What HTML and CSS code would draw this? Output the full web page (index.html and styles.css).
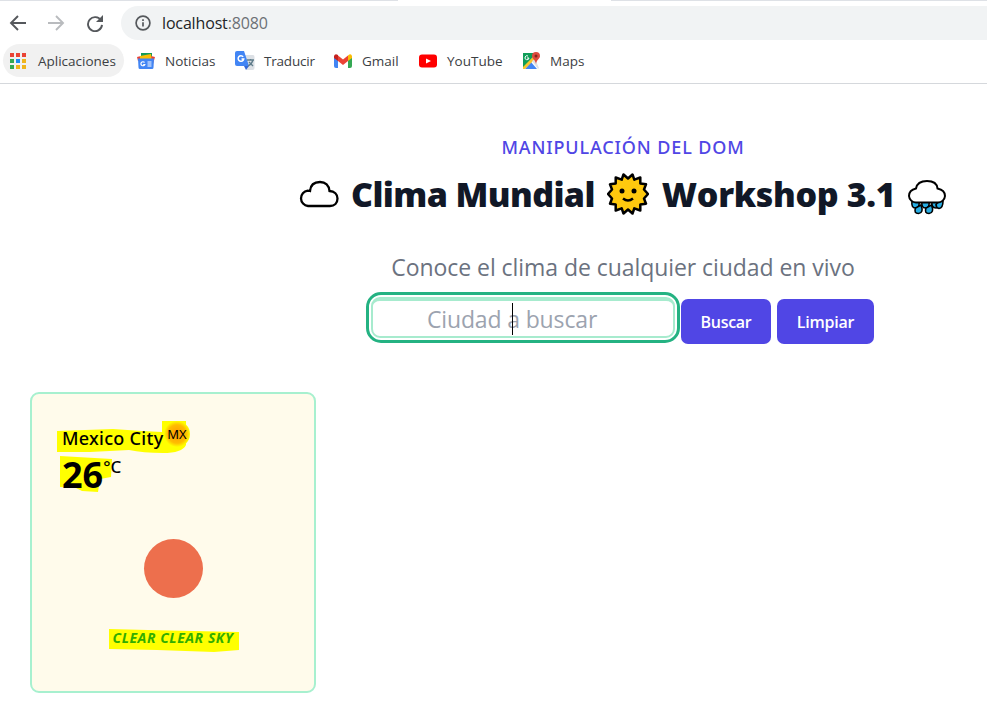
FILE: index.html
```html
<!DOCTYPE html>
<html lang="es">
<head>
<meta charset="utf-8">
<title>Clima Mundial</title>
<link rel="stylesheet" href="styles.css">
</head>
<body>
<header class="browser">
  <div class="tab-edge"><span class="active-tab"></span></div>
  <nav class="toolbar">
    <svg class="nav-icon" viewBox="0 0 18 18"><path d="M17 9H2.500M9 2 2 9l7 7"/></svg>
    <svg class="nav-icon muted" viewBox="0 0 18 18"><path d="M1 9h14.500M9 2l7 7-7 7"/></svg>
    <svg class="nav-icon reload" viewBox="0 0 18 18"><path d="M15 6.500A7 7 0 1 0 16 10.800"/><path class="solid" d="M17 1v7h-7z"/></svg>
    <div class="address">
      <svg class="info" viewBox="0 0 16 16"><circle cx="8" cy="8" r="6.900"/><path d="M8 7.200v4.300M8 4.300v1.700"/></svg>
      <span class="url">localhost<span class="port">:8080</span></span>
    </div>
  </nav>
  <nav class="bookmarks">
    <a class="bookmark apps">
      <svg viewBox="0 0 18 18"><path fill="#e94335" d="M1 1h4v4H1zM7 1h4v4H7zM13 1h4v4h-4z"/><path fill="#34a853" d="M1 7h4v4H1zM1 13h4v4H1z"/><path fill="#1a8cf0" d="M7 7h4v4H7z"/><path fill="#efb51d" d="M13 7h4v4h-4zM7 13h4v4H7zM13 13h4v4h-4z"/></svg>
      <span>Aplicaciones</span>
    </a>
    <a class="bookmark news">
      <svg viewBox="0 0 18 18"><path fill="#169b57" d="M4 1h11v9H4z"/><path fill="#ea4335" d="m14 4 4 1-2 7-6-2z"/><path fill="#ea4335" d="m0 5 4-1v5H1z"/><path fill="#fbbc04" d="m3 4 11-2 1 9H3z"/><path fill="#4285f4" d="M1 6.500h16l-.5 9q0 1.500-1.500 1.500H3q-1.500 0-1.500-1.500z"/><path d="M7.500 10.500a2 2 0 1 0 .3 2H6.200M10.500 10h4M10.500 12h4M10.500 14h4" fill="none" stroke="#fff" stroke-width="1.200"/></svg>
      <span>Noticias</span>
    </a>
    <a class="bookmark translate">
      <svg viewBox="0 0 20 20"><path fill="#dce0e5" d="M8 4h10q1.500 0 1.500 2v11q0 2-2 2h-6z"/><path fill="#4285f4" d="M2 0h7l5 15H2q-2 0-2-2V2q0-2 2-2z"/><path fill="#3367d6" d="M9 15h5l-3 4z"/><path d="M8.200 5.800a2.800 2.800 0 1 0 .5 2.200H6.500" stroke="#fff" stroke-width="1.500" fill="none"/><path d="M12 9h7M15.500 8v1M18 9q-1 4-5 6M14 11l4 4" stroke="#607d8b" stroke-width="1.300" fill="none"/></svg>
      <span>Traducir</span>
    </a>
    <a class="bookmark gmail">
      <svg viewBox="0 0 18 18"><path fill="#4285f4" d="M0 4h4v12H2q-2 0-2-2z"/><path fill="#34a853" d="M14 4h4v10q0 2-2 2h-2z"/><path fill="#ea4335" d="M4 3.500 9 7.500l5-4V9l-5 4-5-4z"/><path fill="#c5221f" d="M0 5V4q1-3 4-1v6L0 6z"/><path fill="#fbbc04" d="M14 3.500Q17 1 18 4v2l-4 3z"/></svg>
      <span>Gmail</span>
    </a>
    <a class="bookmark youtube">
      <svg viewBox="0 0 18 18"><rect y="2.500" width="18" height="13" rx="3" fill="red"/><path fill="#fff" d="M7 6.500v5l5-2.500z"/></svg>
      <span>YouTube</span>
    </a>
    <a class="bookmark maps">
      <svg viewBox="0 0 18 18"><path fill="#0f9d58" d="M1 1h14L1 16z"/><path fill="#4285f4" d="m9 10 6 7H3z"/><path fill="#f8c62c" d="M1 15 12 4l1 3L3 17H1z"/><path fill="#dfe2e5" d="m10 9 3-2 4 9-1 1z"/><path d="M6 4a2 2 0 1 0 1 2H5" stroke="#fff" fill="none"/><path fill="#dd4b3e" d="M14 0q4 0 4 4c0 3-3 3-4 8-1-5-4-5-4-8q0-4 4-4z"/><circle cx="14" cy="4" r="1.500" fill="#842718"/></svg>
      <span>Maps</span>
    </a>
  </nav>
</header>
<main>
  <section class="hero">
    <p class="eyebrow">MANIPULACIÓN DEL DOM</p>
    <h1>
      <svg class="cloud" viewBox="0 0 40 28"><path d="M9 26a7.700 7.700 0 0 1-.3-15.300q1 0 2.300.3C11.500 5 15.500 2 21 2c5.500 0 9 3.500 9.500 9 5 .2 8 3.500 8 7.500 0 4.500-3 7.500-7.500 7.500z"/></svg>
      <span class="title-left">Clima Mundial</span>
      <svg class="sun" viewBox="0 0 42 42"><path d="m21 5.500 4.500-4 1.800 5.200 6-2.200v6l5.700.8-2 5.200 4 4.500-4 4.500 2 5.200-5.700.8v6l-6-2.200-1.800 5.200-4.500-4-4.500 4-1.800-5.200-6 2.200v-6L3 30.700l2-5.200L1 21l4-4.500-2-5.200 5.700-.8v-6l6 2.200 1.800-5.200z"/><g class="face"><circle cx="15" cy="18" r="2.500"/><circle cx="27" cy="18" r="2.500"/></g><path class="smile" d="M16 25.500q5 4 10 0"/></svg>
      <span class="title-right">Workshop 3.1</span>
      <svg class="rain" viewBox="0 0 40 36"><g class="drops"><path d="M5 22h7q1 7-3.500 7Q4 29 5 22zM15 22h7q1 7-3.500 7Q14 29 15 22zM25 22h8q1 7-4 7t-4-7z"/><path d="M14 26q3 8-2.500 8.500-5 0-3-5.500zM24.500 26q3 8-2.500 8.500-5 0-3-5.500zM32 22h4q0 7-4 7.500-3-1-3-4z"/></g><path class="outline" d="M9 23.500A7 7 0 0 1 2 17q0-6 7-7.500C10 4 15 2 20 2s10 2 10.500 7.500Q38 11 38 17a7 7 0 0 1-7 6.500z"/></svg>
    </h1>
    <p class="subtitle">Conoce el clima de cualquier ciudad en vivo</p>
    <form class="search">
      <div class="field"><span class="placeholder">Ciudad a buscar</span><i class="caret"></i></div>
      <button class="btn search-btn" type="button"><span>Buscar</span></button>
      <button class="btn clear-btn" type="button"><span>Limpiar</span></button>
    </form>
  </section>
  <article class="card">
    <svg class="marks" viewBox="0 0 282 298"><path d="M26 37 82 35 111 37 131 38V27h24v24q-4 8-23 8-20 0-34-3l-39 2H26z"/><path d="m29 62 52 3-1 18-11 2-2 13-16-1-6-3-16-1z"/><path d="m78 235 39 1 91 2v18l-25 2-57-2-48-1z"/></svg>
    <h2 class="city"><span class="name">Mexico City</span><sup>MX</sup></h2>
    <div class="temp"><b>26</b><sup>°C</sup></div>
    <div class="weather-icon"></div>
    <p class="condition">CLEAR CLEAR SKY</p>
  </article>
</main>
</body>
</html>
```
FILE: styles.css
```css
*, *::before { box-sizing: border-box; }
body { margin: 0; background: #fff; font-family: "Open Sans", "Noto Sans", sans-serif; color: #000; height: 710px; overflow: hidden; }
p, h1, h2 { margin: 0; }
svg { flex: none; display: block; }
span { white-space: nowrap; }
.browser { height: 84px; border-bottom: 1px solid #d5d8dc; }
.tab-edge { height: 1px; background: #dee1e6; display: flex; padding-left: 398px; }
.active-tab { width: 213px; background: #fff; }
.toolbar { display: flex; height: 39px; padding: 5px 0 0 9px; align-items: center; }
.nav-icon { width: 18px; height: 18px; margin-right: 20px; fill: none; stroke: #55585c; stroke-width: 1.9; }
.muted { stroke: #b9bbbe; }
.reload { margin: 0 17px 0 1px; }
.solid { fill: #55585c; stroke: none; }
.address { flex: 1; height: 34px; border-radius: 17px 0 0 17px; background: #f1f3f4; display: flex; align-items: center; padding-left: 14px; }
.info { width: 16px; height: 16px; fill: none; stroke: #55585c; stroke-width: 1.7; margin-right: 11px; }
.url { font-size: 16px; letter-spacing: -.15px; color: #222427; }
.port { color: #6c7075; }
.bookmarks { display: flex; height: 39px; align-items: center; padding: 2px 0 0 3px; font-size: 13.500px; color: #3c4043; }
.bookmark { display: flex; align-items: center; height: 33px; }
.bookmark svg { width: 18px; height: 18px; }
.bookmark span { margin-left: 10px; }
.apps { width: 121px; padding-left: 6px; border-radius: 17px; background: #f1f1f1; }
.bookmark.apps span { margin-left: 11px; }
.news { width: 98px; margin-left: 13px; }
.translate { width: 99px; }
.translate svg { width: 20px; height: 20px; }
.bookmark.translate span { margin-left: 9px; letter-spacing: -.2px; }
.gmail { width: 85px; }
.youtube { width: 103px; }
.hero { display: flex; flex-direction: column; align-items: center; width: 646px; margin-left: 300px; }
.eyebrow { margin-top: 50px; height: 26px; line-height: 26px; font-family: "Noto Sans", "Open Sans", sans-serif; font-size: 18px; font-weight: 500; letter-spacing: .87px; color: #5046e5; white-space: nowrap; }
h1 { width: 646px; height: 50px; margin-top: 9px; display: flex; align-items: center; color: #111827; font-size: 34px; line-height: 50px; font-weight: 800; }
.cloud { width: 40px; height: 28px; margin-left: -1px; fill: #fff; stroke: #000; stroke-width: 2.300; }
.title-left { margin-left: 12px; width: 244px; letter-spacing: -.6px; }
.sun { width: 42px; height: 42px; margin-left: 12px; fill: #ffc90e; stroke: #000; stroke-width: 2.500; stroke-linejoin: round; }
.face { fill: #000; stroke: none; }
.smile { fill: none; }
.title-right { margin-left: 13px; width: 233px; letter-spacing: -.35px; }
.rain { width: 40px; height: 36px; margin: 5px 0 0 12px; stroke: #000; stroke-width: 2; }
.drops { fill: #28aee4; stroke-width: 1.6; }
.outline { fill: #fff; }
.subtitle { margin-top: 30px; height: 36px; line-height: 36px; font-size: 23px; letter-spacing: -.06px; color: #6b7280; white-space: nowrap; }
.search { display: flex; align-items: flex-start; align-self: stretch; margin: 7px 0 0 66px; height: 51px; }
.field { position: relative; width: 314px; height: 51px; border: 3px solid #24b282; border-radius: 15px; padding: 2px; background: #fff; }
.field::before { content: ""; display: block; height: 41px; border: 2px solid #a7ebce; border-top-width: 4px; border-radius: 9px; }
.placeholder { position: absolute; left: 58px; top: 6px; line-height: 36px; font-size: 23px; letter-spacing: -.15px; color: #9ca3af; }
.caret { position: absolute; left: 143px; top: 8px; width: 1px; height: 32px; background: #000; }
.btn { height: 45px; margin-top: 7px; border: 0; border-radius: 7px; background: #5046e5; color: #fff; font: 600 16px "Open Sans", sans-serif; padding: 0; }
.search-btn { width: 90px; margin-left: 1px; letter-spacing: -.3px; }
.clear-btn { width: 97px; margin-left: 6px; letter-spacing: -.2px; }
.card { position: relative; width: 286px; height: 301px; margin: 49px 0 0 30px; border: 2px solid #a7f0cf; border-radius: 9px; background: #fffbeb; padding: 31px 30px; }
.marks { position: absolute; left: -1px; top: 0; width: 282px; height: 298px; fill: #ff0; }
.city { position: relative; display: flex; height: 28px; font-family: "Noto Sans", "Open Sans", sans-serif; font-size: 18px; line-height: 26px; font-weight: 500; }
.city .name { width: 101px; letter-spacing: .28px; }
.city sup { margin: -4px 0 0 1px; width: 26px; height: 26px; border-radius: 50%; background: radial-gradient(#ff9f00 10%, #ffbd00 50%, #ff0 71%); font-size: 13px; font-weight: 400; text-align: center; }
.temp { position: relative; display: flex; height: 45px; font-size: 36px; line-height: 43px; }
.temp sup { font-family: "Noto Sans", "Open Sans", sans-serif; font-size: 17px; line-height: 27px; font-weight: 500; }
.weather-icon { width: 59px; height: 59px; border-radius: 50%; background: #ed6f4d; margin: 41px 0 0 82px; }
.condition { position: relative; margin: 30px 0 0; height: 20px; line-height: 20px; font-size: 14px; letter-spacing: .55px; font-weight: 700; font-style: italic; color: #32ad00; text-align: center; white-space: nowrap; }
```
